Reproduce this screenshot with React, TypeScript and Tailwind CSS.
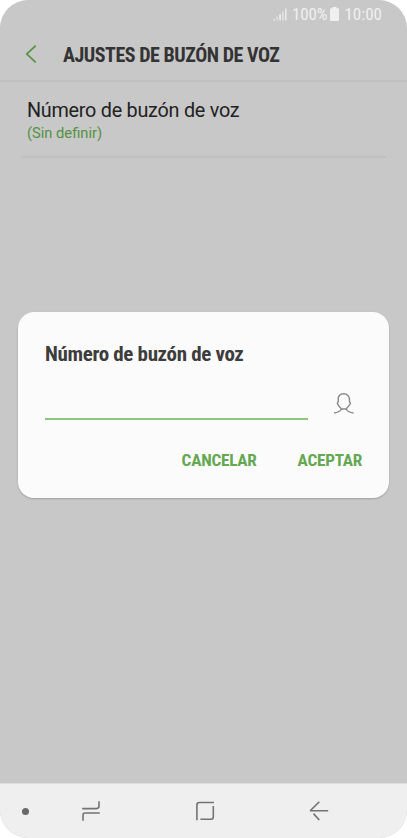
import { useState } from "react";

const CONDENSED = "font-['Roboto_Condensed','Roboto',sans-serif] [font-stretch:condensed]";

const StatusBar = () => {
	return (
		<div className="h-7 pr-[25px] flex justify-end items-center text-[#f0f0f0]">
			<svg width="14" height="14" viewBox="0 0 14 14" className="mr-[5px]" fill="currentColor">
				<path d="M0 13.5L2 11.5V13.5Z" />
				<rect x="3.5" y="9.5" width="1.3" height="4" opacity="0.7" />
				<rect x="6.2" y="7" width="1.7" height="6.5" opacity="0.9" />
				<rect x="9.2" y="4.5" width="1.5" height="9" opacity="0.7" />
				<rect x="12" y="1.5" width="1.6" height="12" opacity="0.8" />
			</svg>
			<span className={`${CONDENSED} text-[17px] leading-7 tracking-[-0.1px]`}>100%</span>
			<svg width="9" height="14" viewBox="0 0 9 14" className="ml-[3px] mr-[5px]" fill="currentColor">
				<path d="M2.5 0H6.5V1.2H8Q9 1.2 9 2.2V13Q9 14 8 14H1Q0 14 0 13V2.2Q0 1.2 1 1.2H2.5Z" />
			</svg>
			<span className={`${CONDENSED} text-[17px] leading-7`}>10:00</span>
		</div>
	);
};

const Header = () => {
	return (
		<header className="h-[54px] flex items-center border-b-2 border-[#c0c0c0] pl-[25px]">
			<button className="cursor-pointer" aria-label="Atrás">
				<svg width="12" height="18" viewBox="0 0 12 18" fill="none" stroke="#529240" strokeWidth="1.7">
					<path d="M10.7 0.7L1.8 9L10.7 17.3" />
				</svg>
			</button>
			<h1 className={`${CONDENSED} ml-[26px] pt-[2px] text-[20px] leading-7 tracking-[-0.47px] font-bold text-[#333333] whitespace-nowrap`}>
				AJUSTES DE BUZÓN DE VOZ
			</h1>
		</header>
	);
};

const NavBar = () => {
	return (
		<nav className="h-[55px] bg-[#efefef] border-t border-[#dedede] flex items-center">
			<span className="ml-[22px] w-[7px] h-[7px] rounded-full bg-[#696969]" />
			<svg width="20" height="22" viewBox="0 0 20 22" className="ml-[52px]" fill="none" stroke="#737373" strokeWidth="1.6">
				<path d="M1.2 8.6H15.5Q18 8.6 18 6.1V1.2" />
				<path d="M18.8 13H4Q2 13 2 15V20.7" />
			</svg>
			<svg width="20" height="22" viewBox="0 0 20 22" className="ml-[94px]" fill="none" stroke="#737373" strokeWidth="1.6">
				<path d="M1.9 20.2V5Q1.9 2.5 4.4 2.5H19" />
				<path d="M18.3 6V17Q18.3 19.2 16.1 19.2H5.4" />
			</svg>
			<svg width="20" height="22" viewBox="0 0 20 22" className="ml-[94px]" fill="none" stroke="#737373" strokeWidth="1.6">
				<path d="M10.3 1.7L1.7 10.2Q1.1 10.8 2.2 10.8H19.2" />
				<path d="M4.5 13.6L10.3 20" />
			</svg>
		</nav>
	);
};

type DialogProps = {
	value: string;
	onChange: (value: string) => void;
};

const VoicemailDialog = ({ value, onChange }: DialogProps) => {
	return (
		<div className="absolute left-[18px] right-[18px] top-[312px] h-[186px] rounded-[16px] bg-[#fbfbfb] shadow-[0_1px_2px_rgba(0,0,0,0.2)] px-[27px] pt-7">
			<h2 className={`${CONDENSED} text-[21px] leading-7 tracking-[-0.34px] font-bold text-[#3d3d3d] whitespace-nowrap`}>
				Número de buzón de voz
			</h2>
			<div className="flex">
				<input
					type="tel"
					value={value}
					onChange={(e) => onChange(e.target.value)}
					className="w-[263px] h-[52px] border-b-2 border-[#8cc67b] outline-none text-lg"
				/>
				<svg width="22" height="22" viewBox="0 0 22 22" className="mt-[25px] ml-[25px]" fill="none" stroke="#888888" strokeWidth="1.4">
					<path d="M10.7 0.8C7.2 0.8 5.2 3.3 5.2 6.6V8.6L4.3 10.3L5.6 12.6L8.5 16H13.1L16 12.6L17.4 10.3L16.5 8.6V6.6C16.5 3.3 14.3 0.8 10.7 0.8Z" strokeLinejoin="round" />
					<path d="M8.5 16C7 18.4 4.6 19.6 1 20" />
					<path d="M13.1 16C14.6 18.4 17 19.6 20.6 20" />
				</svg>
			</div>
			<div className="mt-[26px] flex justify-end gap-[41px]">
				<button className={`${CONDENSED} text-[17.2px] leading-7 tracking-[-0.25px] font-bold text-[#64a852] cursor-pointer`}>CANCELAR</button>
				<button className={`${CONDENSED} text-[17.2px] leading-7 tracking-[-0.25px] font-bold text-[#64a852] cursor-pointer`}>ACEPTAR</button>
			</div>
		</div>
	);
};

const App = () => {
	const [numero, setNumero] = useState("");

	return (
		<div className="bg-white w-[407px] h-[838px]">
			<div className="relative w-full h-full rounded-[28px] overflow-hidden bg-[#c8c8c8] flex flex-col font-['Roboto',sans-serif]">
				<StatusBar />
				<Header />
				<main className="flex-1">
					<div className="mx-[21px] h-[76px] pl-[6px] pt-[15px] border-b-2 border-[#c0c0c0]">
						<p className="text-[19.8px] leading-7 tracking-[-0.25px] text-[#222222]">Número de buzón de voz</p>
						<p className="text-[14.7px] leading-[17px] text-[#529240]">(Sin definir)</p>
					</div>
				</main>
				<NavBar />
				<VoicemailDialog value={numero} onChange={setNumero} />
			</div>
		</div>
	);
};

export default App;
